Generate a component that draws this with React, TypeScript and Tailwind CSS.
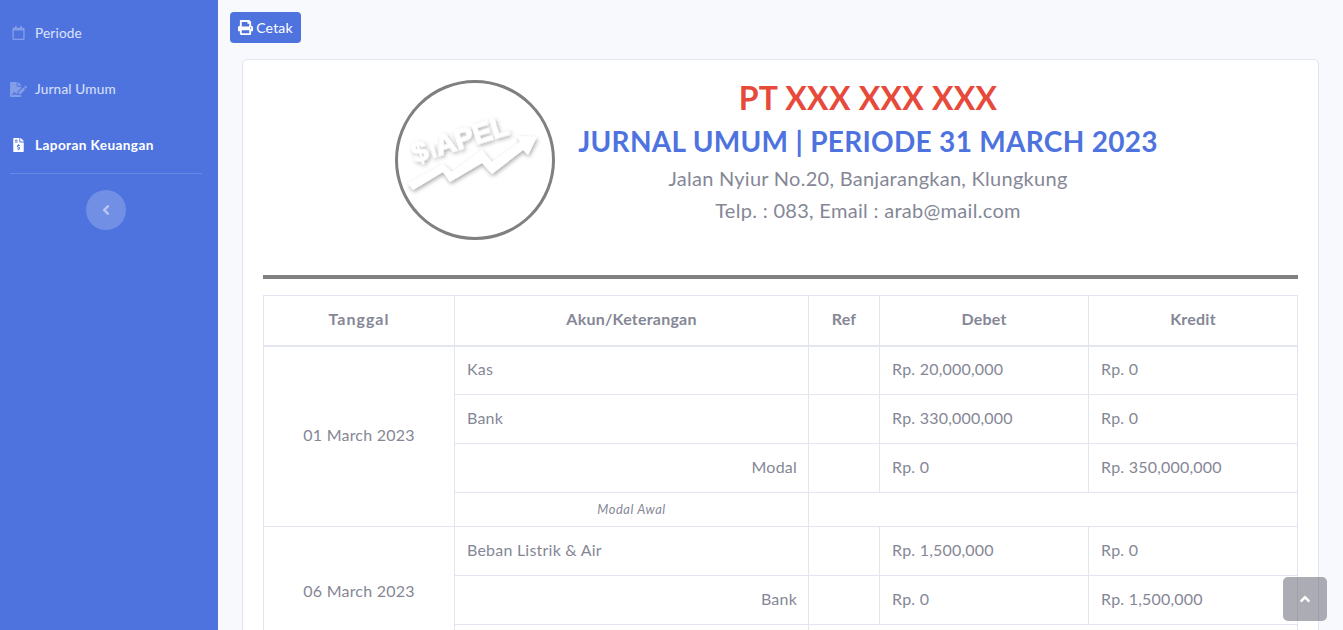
import { FaRegCalendar, FaFileSignature, FaFileInvoiceDollar, FaPrint, FaAngleLeft, FaAngleUp } from "react-icons/fa";

const td = "border border-[#e3e6f0] px-3 pb-[2px] align-middle";
const Row = ({ akun, right, debet, kredit }: { akun: string; right?: boolean; debet: string; kredit: string }) => (
  <>
    <td className={`border border-[#e3e6f0] pl-3 pb-[2px] align-middle h-[49px] ${right ? "text-right pr-[11px]" : "pr-3"}`}>{akun}</td>
    <td className={td}></td>
    <td className={td}>{debet}</td>
    <td className={td}>{kredit}</td>
  </>
);

const headers = [
  { label: "Tanggal", cls: "tracking-[1px]" },
  { label: "Akun/Keterangan", cls: "" },
  { label: "Ref", cls: "" },
  { label: "Debet", cls: "" },
  { label: "Kredit", cls: "" },
];

function Logo() {
  return (
    <svg width="160" height="160" viewBox="0 0 160 160" className="shrink-0">
      <defs>
        <filter id="sh" x="-20%" y="-30%" width="140%" height="170%">
          <feDropShadow dx="1" dy="2" stdDeviation="2" floodColor="#000" floodOpacity="0.35" />
        </filter>
      </defs>
      <circle cx="80" cy="80" r="78.5" fill="#fff" stroke="#808080" strokeWidth="3" />
      <path filter="url(#sh)" d="M13 103 L48 84 L57 92 L87 70 L97 82 L125 62 L122 56 L142 57 L133 75 L128 70 L97 94 L87 83 L55 102 L48 92 L18 110 Z" fill="#fff" />
      <text filter="url(#sh)" x="0" y="0" transform="translate(20 83) rotate(-17)" fill="#fff" stroke="#fff" strokeWidth="0.8" fontFamily="'Liberation Sans', sans-serif" fontWeight="700" fontSize="28">
        $<tspan fontSize="16" dx="3">I</tspan><tspan dx="1">APEL</tspan>
      </text>
    </svg>
  );
}

export default function App() {
  return (
    <div className="flex h-[630px] overflow-hidden bg-[#f8f9fc] text-[#858796] font-['Lato','Noto_Sans',sans-serif] tracking-[0.18px]">
      <aside className="w-[218px] shrink-0 bg-[#4e73df] flex flex-col pl-[10px] pr-[16px]">
        <nav className="flex flex-col pt-[5px] text-[13.6px] leading-[20px]">
          <div className="h-[56px] flex items-center gap-[10px] pl-[2px] text-white/80">
            <FaRegCalendar className="w-[13px] h-[14px] text-white/30 shrink-0" />
            <span>Periode</span>
          </div>
          <div className="h-[56px] flex items-center gap-[8px] text-white/80">
            <FaFileSignature className="w-[17px] h-[15px] text-white/30 shrink-0" />
            <span>Jurnal Umum</span>
          </div>
          <div className="h-[56px] flex items-center gap-[11px] pl-[3px] text-white font-bold tracking-[0.4px]">
            <FaFileInvoiceDollar className="w-[11px] h-[14px] shrink-0" />
            <span>Laporan Keuangan</span>
          </div>
        </nav>
        <hr className="border-0 border-t border-white/15" />
        <div className="flex justify-center mt-[16px]">
          <button className="w-10 h-10 rounded-full bg-white/20 flex items-center justify-center text-white/50">
            <FaAngleLeft className="w-[12px] h-[16px]" />
          </button>
        </div>
      </aside>

      <main className="flex-1 min-w-0 pl-3 pt-3">
        <button className="h-[31px] w-[71px] rounded bg-[#4e73df] text-white text-[14px] flex items-center justify-center gap-[3px]">
          <FaPrint className="w-[15px] h-[15px]" />
          <span>Cetak</span>
        </button>
        <section className="mt-4 ml-3 mr-6 rounded-[5px] border border-[#e3e6f0] bg-white px-5 pt-5">
          <header className="flex items-start gap-[23px] pl-[132px] h-[195px]">
            <Logo />
            <div className="text-center w-[580px] shrink-0 -mt-px">
              <h1 className="text-[32px] leading-[38px] font-bold text-[#e74a3b] tracking-[0.3px]">PT XXX XXX XXX</h1>
              <h2 className="text-[28px] leading-[34px] mt-[7px] font-bold text-[#4e73df] tracking-[0.3px]">JURNAL UMUM | PERIODE 31 MARCH 2023</h2>
              <p className="text-[20px] leading-[30px] mt-[5px] tracking-[0.27px]">Jalan Nyiur No.20, Banjarangkan, Klungkung</p>
              <p className="text-[20px] leading-[30px] mt-[2px] tracking-[0.3px]">Telp. : 083, Email : arab@mail.com</p>
            </div>
          </header>
          <div className="h-1 bg-[#808080]"></div>
          <table className="mt-4 w-[1034px] table-fixed border-collapse text-[16px] tracking-[0.22px]">
            <colgroup>
              <col className="w-[191px]" />
              <col className="w-[354px]" />
              <col className="w-[71px]" />
              <col className="w-[209px]" />
              <col className="w-[209px]" />
            </colgroup>
            <thead>
              <tr className="h-[50px]">
                {headers.map((h) => (
                  <th key={h.label} className={`border border-b-2 border-[#e3e6f0] pb-[2px] text-center align-middle font-bold ${h.cls}`}>{h.label}</th>
                ))}
              </tr>
            </thead>
            <tbody>
              <tr>
                <td rowSpan={4} className={`${td} text-center`}>01 March 2023</td>
                <Row akun="Kas" debet="Rp. 20,000,000" kredit="Rp. 0" />
              </tr>
              <tr><Row akun="Bank" debet="Rp. 330,000,000" kredit="Rp. 0" /></tr>
              <tr><Row akun="Modal" right debet="Rp. 0" kredit="Rp. 350,000,000" /></tr>
              <tr>
                <td className="border border-[#e3e6f0] px-3 align-middle h-[34px] text-center text-[12.8px] italic tracking-[0.6px]">Modal Awal</td>
                <td colSpan={3} className={td}></td>
              </tr>
              <tr>
                <td rowSpan={3} className={`${td} text-center`}>06 March 2023</td>
                <Row akun="Beban Listrik & Air" debet="Rp. 1,500,000" kredit="Rp. 0" />
              </tr>
              <tr><Row akun="Bank" right debet="Rp. 0" kredit="Rp. 1,500,000" /></tr>
              <tr>
                <td className={`${td} h-[32px]`}></td>
                <td colSpan={3} className={td}></td>
              </tr>
            </tbody>
          </table>
        </section>
      </main>

      <button className="fixed right-4 bottom-[9px] w-11 h-11 rounded-[5px] bg-[#5a5c69]/50 flex items-center justify-center text-white">
        <FaAngleUp className="w-[12px] h-[16px]" />
      </button>
    </div>
  );
}
